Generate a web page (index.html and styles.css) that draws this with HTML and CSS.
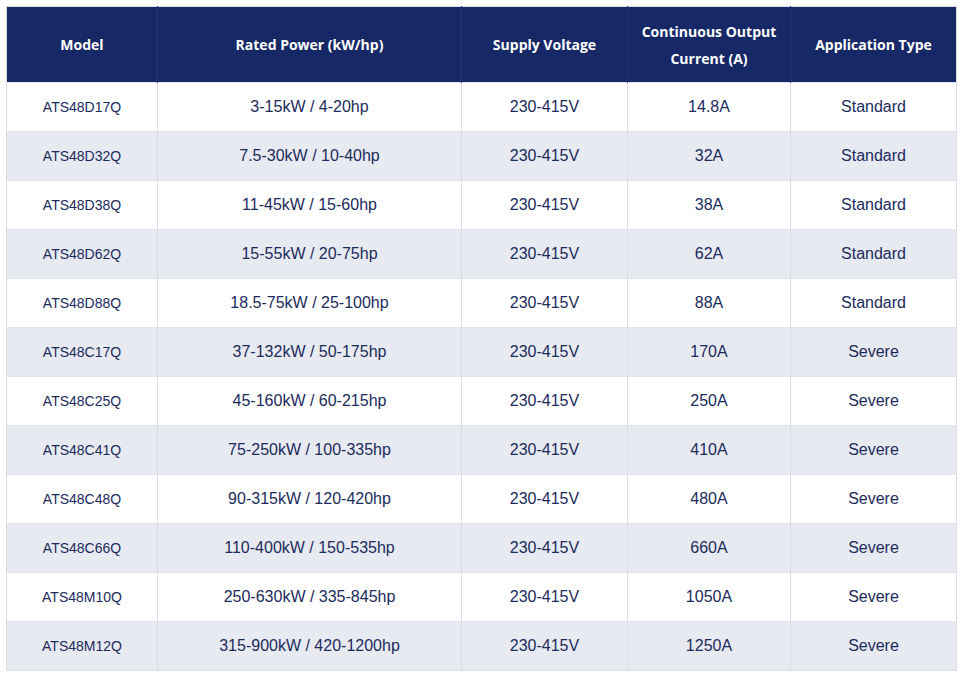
FILE: index.html
```html
<!DOCTYPE html>
<html>
<head>
<meta charset="utf-8">
<link rel="stylesheet" href="styles.css">
</head>
<body>
<table class="spec">
  <colgroup>
    <col class="c1"><col class="c2"><col class="c3"><col class="c4"><col class="c5">
  </colgroup>
  <thead>
    <tr>
      <th>Model</th>
      <th>Rated Power (kW/hp)</th>
      <th>Supply Voltage</th>
      <th>Continuous Output Current (A)</th>
      <th>Application Type</th>
    </tr>
  </thead>
  <tbody>
    <tr><td class="model">ATS48D17Q</td><td>3-15kW / 4-20hp</td><td>230-415V</td><td>14.8A</td><td>Standard</td></tr>
    <tr><td class="model">ATS48D32Q</td><td>7.5-30kW / 10-40hp</td><td>230-415V</td><td>32A</td><td>Standard</td></tr>
    <tr><td class="model">ATS48D38Q</td><td>11-45kW / 15-60hp</td><td>230-415V</td><td>38A</td><td>Standard</td></tr>
    <tr><td class="model">ATS48D62Q</td><td>15-55kW / 20-75hp</td><td>230-415V</td><td>62A</td><td>Standard</td></tr>
    <tr><td class="model">ATS48D88Q</td><td>18.5-75kW / 25-100hp</td><td>230-415V</td><td>88A</td><td>Standard</td></tr>
    <tr><td class="model">ATS48C17Q</td><td>37-132kW / 50-175hp</td><td>230-415V</td><td>170A</td><td>Severe</td></tr>
    <tr><td class="model">ATS48C25Q</td><td>45-160kW / 60-215hp</td><td>230-415V</td><td>250A</td><td>Severe</td></tr>
    <tr><td class="model">ATS48C41Q</td><td>75-250kW / 100-335hp</td><td>230-415V</td><td>410A</td><td>Severe</td></tr>
    <tr><td class="model">ATS48C48Q</td><td>90-315kW / 120-420hp</td><td>230-415V</td><td>480A</td><td>Severe</td></tr>
    <tr><td class="model">ATS48C66Q</td><td>110-400kW / 150-535hp</td><td>230-415V</td><td>660A</td><td>Severe</td></tr>
    <tr><td class="model">ATS48M10Q</td><td>250-630kW / 335-845hp</td><td>230-415V</td><td>1050A</td><td>Severe</td></tr>
    <tr><td class="model">ATS48M12Q</td><td>315-900kW / 420-1200hp</td><td>230-415V</td><td>1250A</td><td>Severe</td></tr>
  </tbody>
</table>
</body>
</html>
```
FILE: styles.css
```css
html, body {
  margin: 0;
  padding: 0;
  background: #ffffff;
}
body {
  padding: 6px;
}
.spec {
  width: 950px;
  border-collapse: collapse;
  table-layout: fixed;
  font-family: "Liberation Sans", Arial, sans-serif;
  color: #1b2b5c;
  border: 1px solid #dcdde2;
}
.c1 { width: 151px; }
.c2 { width: 304px; }
.c3 { width: 166px; }
.c4 { width: 163px; }
.c5 { width: 166px; }
.spec th {
  background: #172866;
  color: #ffffff;
  font-family: "Open Sans", "Inter", sans-serif;
  font-weight: 700;
  font-size: 14px;
  line-height: 27px;
  height: 76px;
  padding: 0 6px;
  text-align: center;
  vertical-align: middle;
  border-left: 1px solid #24356f;
  box-sizing: border-box;
}
.spec th:first-child { border-left: none; }
.spec td {
  height: 49px;
  box-sizing: border-box;
  padding: 0 8px;
  text-align: center;
  vertical-align: middle;
  font-size: 16px;
  border-left: 1px solid #dcdde2;
  border-top: 1px solid #e4e5ea;
}
.spec td:first-child { border-left: none; }
.spec td.model { font-size: 14px; }
.spec tbody tr:nth-child(even) td { background: #e8eaf2; }
.spec tbody tr:nth-child(odd) td { background: #ffffff; }
```
